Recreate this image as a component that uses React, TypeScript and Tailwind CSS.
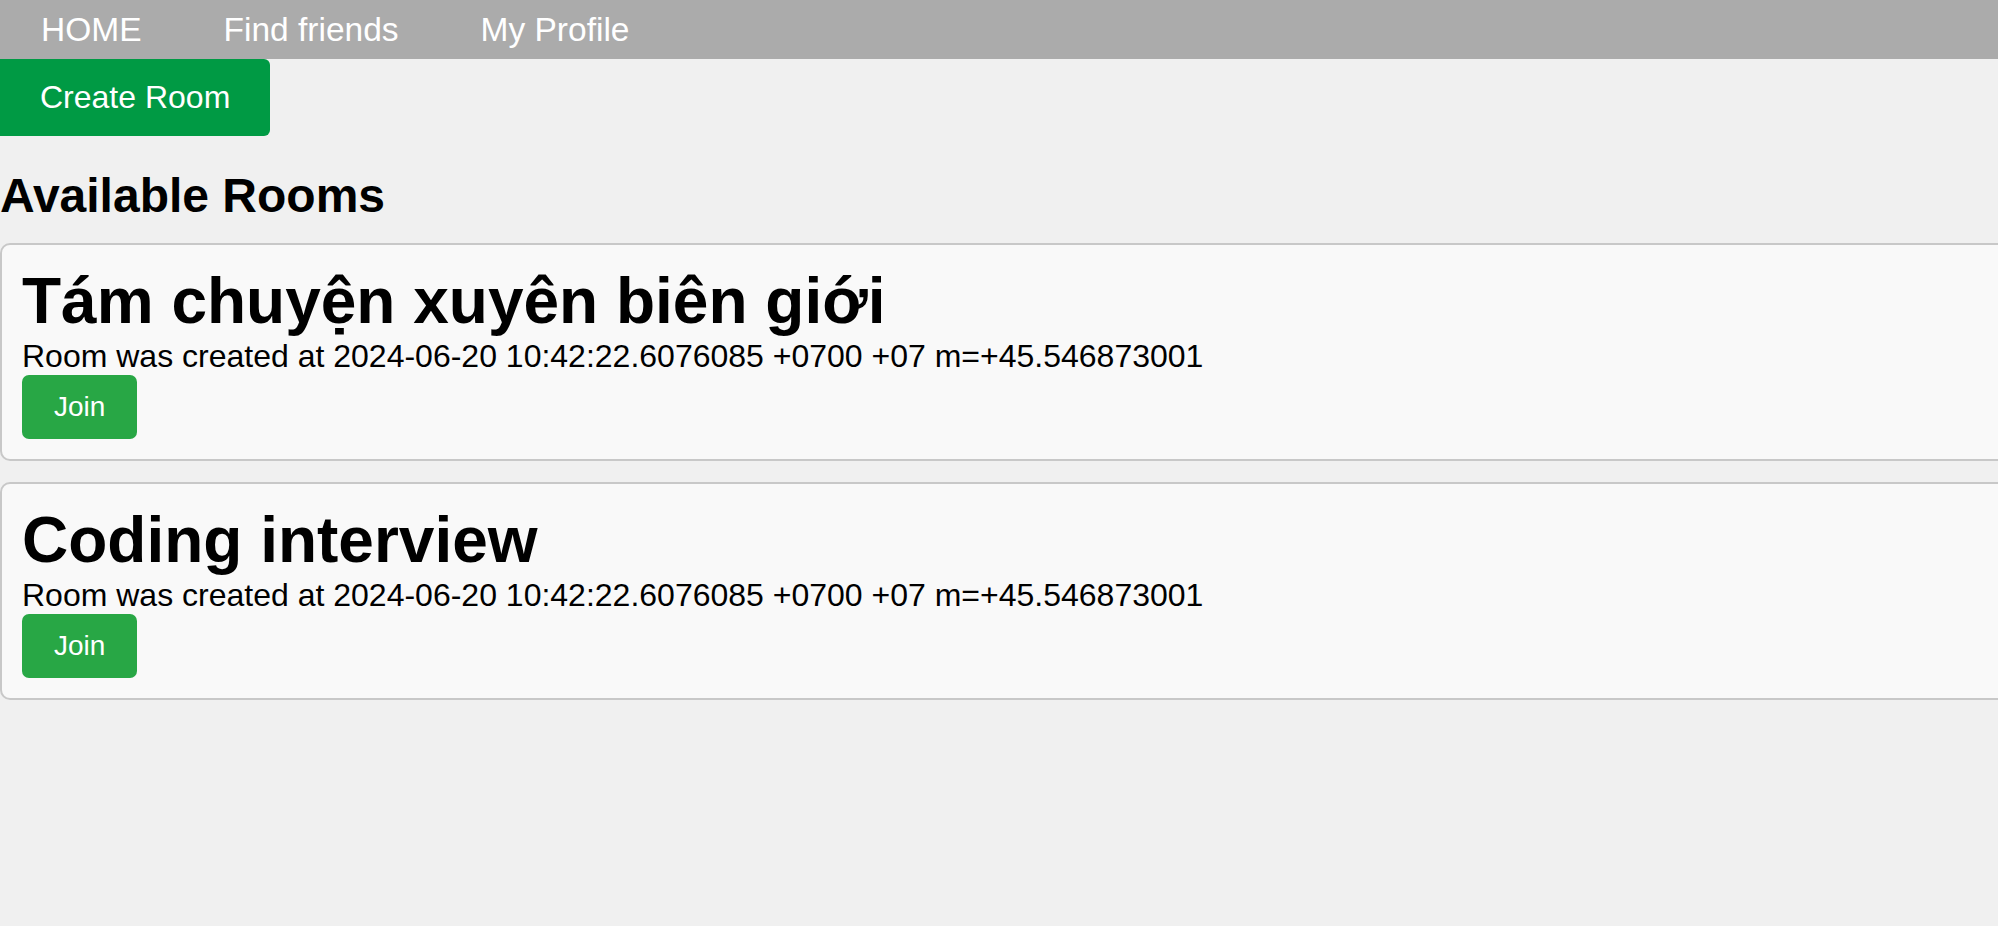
import React from "react";

const rooms = [
  { name: "Tám chuyện xuyên biên giới", created: "2024-06-20 10:42:22.6076085 +0700 +07 m=+45.546873001" },
  { name: "Coding interview", created: "2024-06-20 10:42:22.6076085 +0700 +07 m=+45.546873001" },
];

export default function App() {
  return (
    <div
      className="min-h-screen w-full overflow-hidden bg-[#f0f0f0] text-black"
      style={{ fontFamily: '"Liberation Sans", Arial, Helvetica, sans-serif' }}
    >
      <nav className="flex h-[59px] items-center bg-[#ababab]">
        {["HOME", "Find friends", "My Profile"].map((l) => (
          <a key={l} className="px-[41px] text-[33.5px] leading-[38px] text-white">
            {l}
          </a>
        ))}
      </nav>
      <button className="block rounded-r-[6px] bg-[#009a44] px-[40px] py-[20px] text-[32px] leading-[37px] text-white">
        Create Room
      </button>
      <h2 className="mt-[32px] text-[48px] font-bold leading-[55px]">Available Rooms</h2>
      <div className="mt-[20px] flex flex-col gap-[21px]">
        {rooms.map((r) => (
          <div
            key={r.name}
            className="w-[calc(100%+40px)] rounded-[10px] border-2 border-[#c8c8c8] bg-[#f9f9f9] p-[20px]"
          >
            <h1 className="text-[64px] font-bold leading-[73px]">{r.name}</h1>
            <p className="text-[32px] leading-[37px]">Room was created at {r.created}</p>
            <button className="rounded-[7px] bg-[#28a745] px-[32px] py-[14px] text-[28px] leading-[36px] text-white">
              Join
            </button>
          </div>
        ))}
      </div>
    </div>
  );
}
